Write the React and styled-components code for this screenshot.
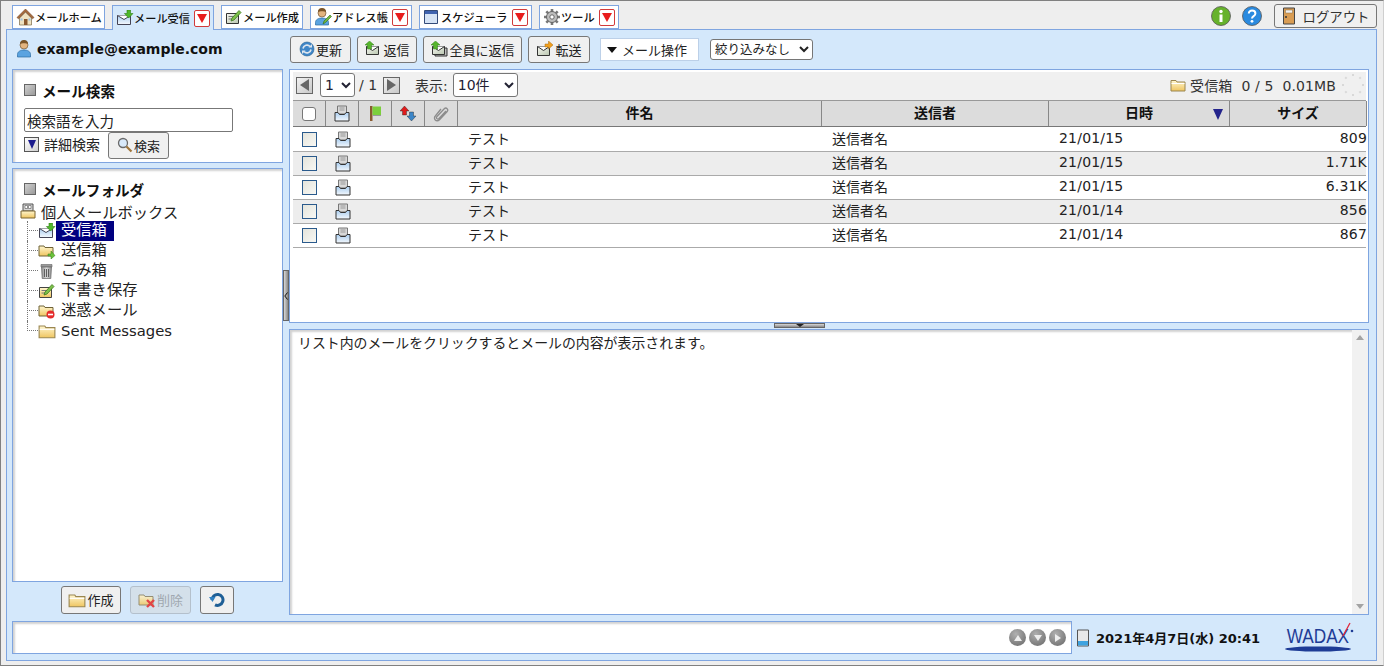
import styled, { createGlobalStyle } from "styled-components";

const GlobalStyle = createGlobalStyle`
  html, body {
    margin: 0;
    padding: 0;
    background: #eeeeee;
  }
  body {
    font-family: "DejaVu Sans", "Noto Sans CJK JP", sans-serif;
    color: #222;
  }
  * {
    box-sizing: border-box;
  }
`;

const Window = styled.div`
  width: 1384px;
  height: 666px;
  display: flex;
  flex-direction: column;
  background: #eeeeee;
  border: 1px solid #808080;
  border-right-color: #cfcfcf;
  overflow: hidden;
`;

const TopBar = styled.div`
  height: 28px;
  flex: none;
  display: flex;
  align-items: flex-end;
  padding: 0 6px 0 11px;
  gap: 7px;
`;

const Tab = styled.div`
  width: ${(p) => p.$w}px;
  height: ${(p) => (p.$active ? 25 : 24)}px;
  margin-bottom: ${(p) => (p.$active ? -1 : 0)}px;
  display: flex;
  align-items: center;
  padding-left: 3px;
  background: ${(p) => (p.$active ? "#d4e8fb" : "#fff")};
  border: 1px solid #7fa5e0;
  border-bottom: ${(p) => (p.$active ? "none" : "1px solid #7fa5e0")};
  font-size: 11.2px;
  font-weight: 500;
  color: #111;
  white-space: nowrap;
  position: relative;
  z-index: 1;
`;

const TabText = styled.span`
  flex: 1;
`;

const TabDrop = styled.span`
  width: 16px;
  height: 17px;
  flex: none;
  margin-right: 3px;
  background: #fff;
  border: 1px solid #d23a3a;
  border-radius: 2px;
  display: flex;
  align-items: center;
  justify-content: center;
  &::before {
    content: "";
    border-left: 5px solid transparent;
    border-right: 5px solid transparent;
    border-top: 9px solid #e81c1c;
  }
`;

const TopRight = styled.div`
  margin-left: auto;
  display: flex;
  align-items: center;
  gap: 11px;
  height: 28px;
  padding-top: 2px;
`;

const LogoutButton = styled.button`
  width: 103px;
  height: 24px;
  margin-left: 1px;
  display: flex;
  align-items: center;
  justify-content: center;
  gap: 7px;
  padding: 0;
  background: #f0f0f0;
  border: 1px solid #777;
  border-radius: 3px;
  font: inherit;
  font-size: 13.4px;
  color: #333;
`;

const Panel = styled.div`
  flex: 1;
  margin: 0 6px 4px 5px;
  display: flex;
  flex-direction: column;
  padding: 0 7px 6px 5px;
  background: #d4e8fb;
  border: 1px solid #7fa5e0;
  min-height: 0;
`;

const Body = styled.div`
  flex: 1;
  display: flex;
  min-height: 0;
`;

const LeftColumn = styled.div`
  width: 271px;
  flex: none;
  display: flex;
  flex-direction: column;
`;

const UserRow = styled.div`
  height: 39px;
  flex: none;
  display: flex;
  align-items: center;
  gap: 3px;
  padding: 0 0 2px 4px;
  font-size: 14px;
  font-weight: 700;
  color: #111;
`;

const Box = styled.div`
  background: #fff;
  border: 1px solid #7fa5e0;
  box-shadow: inset 2px 2px 2px rgba(0, 0, 0, 0.18);
`;

const SearchBox = styled(Box)`
  height: 94px;
  flex: none;
  padding: 10px 11px 0;
`;

const FolderBox = styled(Box)`
  flex: 1;
  margin-top: 5px;
  padding: 10px 7px 0;
`;

const BoxTitle = styled.div`
  display: flex;
  align-items: center;
  gap: 6px;
  height: 20px;
  padding-left: ${(p) => p.$indent || 0}px;
  font-size: 14.6px;
  font-weight: 700;
  color: #111;
  &::before {
    content: "";
    width: 10px;
    height: 10px;
    background: linear-gradient(135deg, #d0d0d0, #9a9a9a);
    border: 1px solid #666;
  }
`;

const SearchInput = styled.input`
  display: block;
  width: 209px;
  height: 24px;
  margin-top: 8px;
  padding: 0 2px;
  border: 1px solid #777;
  border-radius: 2px;
  font: inherit;
  font-size: 14.5px;
  color: #222;
  background: #fff;
`;

const SearchRow = styled.div`
  display: flex;
  align-items: flex-start;
  font-size: 14px;
  height: 27px;
`;

const DetailToggle = styled.span`
  width: 15px;
  height: 15px;
  flex: none;
  margin: 5px 5px 0 0;
  background: linear-gradient(135deg, #fff, #cfcfcf);
  border: 1px solid #555;
  display: flex;
  align-items: center;
  justify-content: center;
  &::before {
    content: "";
    border-left: 4px solid transparent;
    border-right: 4px solid transparent;
    border-top: 9px solid #1a1a8c;
  }
`;

const DetailLabel = styled.span`
  margin-top: 2px;
  width: 64px;
  white-space: nowrap;
`;

const Btn = styled.button`
  height: ${(p) => p.$h || 27}px;
  width: ${(p) => p.$w}px;
  flex: none;
  display: flex;
  align-items: center;
  justify-content: center;
  gap: 1px;
  padding: 0 0 1px;
  background: ${(p) => (p.disabled ? "#d4e0ea" : "#f0f0f0")};
  border: 1px solid ${(p) => (p.disabled ? "#b4c0cc" : "#777")};
  border-radius: 3px;
  font: inherit;
  font-size: 13px;
  color: ${(p) => (p.disabled ? "#a0a8b0" : "#222")};
`;

const Tree = styled.div`
  margin-top: 2px;
  font-size: 15.3px;
  color: #222;
`;

const TreeRoot = styled.div`
  display: flex;
  align-items: center;
  gap: 5px;
  height: 20px;
  white-space: nowrap;
`;

const TreeList = styled.div`
  padding-left: 18px;
`;

const TreeItem = styled.div`
  height: 20px;
  display: flex;
  align-items: center;
  position: relative;
  &::before {
    content: "";
    position: absolute;
    left: -11px;
    top: 9px;
    width: 11px;
    border-top: 1px dotted #777;
  }
  &::after {
    content: "";
    position: absolute;
    left: -11px;
    top: 0;
    height: ${(p) => (p.$last ? 10 : 20)}px;
    border-left: 1px dotted #777;
  }
`;

const TreeLabel = styled.span`
  height: 20px;
  line-height: 19px;
  padding: 0 ${(p) => (p.$selected ? 7 : 0)}px 0 5px;
  background: ${(p) => (p.$selected ? "#000080" : "transparent")};
  color: ${(p) => (p.$selected ? "#fff" : "#222")};
  font-size: ${(p) => (p.$latin ? 14.8 : 15.3)}px;
  white-space: nowrap;
`;

const FolderActions = styled.div`
  height: 39px;
  flex: none;
  display: flex;
  align-items: flex-start;
  padding: 4px 0 0 49px;
  gap: 9px;
`;

const Splitter = styled.div`
  width: 6px;
  flex: none;
  padding-top: 240px;
`;

const SplitGrip = styled.div`
  width: 6px;
  height: 51px;
  background: linear-gradient(90deg, #d8d8d8, #888);
  border: 1px solid #666;
  display: flex;
  align-items: center;
  justify-content: center;
`;

const RightColumn = styled.div`
  flex: 1;
  min-width: 0;
  display: flex;
  flex-direction: column;
`;

const Toolbar = styled.div`
  height: 39px;
  flex: none;
  display: flex;
  align-items: flex-start;
  padding: 6px 0 0 1px;
  gap: 6px;
`;

const ActionMenu = styled.div`
  width: 99px;
  height: 23px;
  margin: 2px 0 0 4px;
  display: flex;
  align-items: center;
  padding-left: 6px;
  gap: 5px;
  background: #fff;
  border: 1px solid #bcd0e8;
  font-size: 13px;
  white-space: nowrap;
  &::before {
    content: "";
    border-left: 5px solid transparent;
    border-right: 5px solid transparent;
    border-top: 6px solid #111;
  }
`;

const FilterSelect = styled.select`
  width: 103px;
  height: 21px;
  margin: 3px 0 0 5px;
  padding: 0;
  border: 1px solid #767676;
  border-radius: 3px;
  background: #fff;
  font: inherit;
  font-size: 12.5px;
  color: #222;
`;

const ListBox = styled(Box)`
  height: 254px;
  flex: none;
  padding: 2px 2px 0 3px;
  background: #fff;
  box-shadow: none;
`;

const Pager = styled.div`
  height: 28px;
  display: flex;
  align-items: center;
  padding: 0 1px 2px 3px;
  background: #f0f0f0;
  font-size: 14px;
  color: #333;
`;

const PageArrow = styled.span`
  width: 17px;
  height: 17px;
  flex: none;
  background: linear-gradient(135deg, #f2f2f2, #c8c8c8);
  border: 1px solid #666;
  display: flex;
  align-items: center;
  justify-content: center;
  &::before {
    content: "";
    border-top: 6px solid transparent;
    border-bottom: 6px solid transparent;
    ${(p) => (p.$dir === "left" ? "border-right" : "border-left")}: 9px solid #666;
  }
`;

const PagerSelect = styled.select`
  width: ${(p) => p.$w}px;
  height: 24px;
  flex: none;
  margin-left: ${(p) => p.$ml || 0}px;
  border: 1px solid #767676;
  border-radius: 3px;
  background: #fff;
  font: inherit;
  font-size: 14px;
  color: #223;
`;

const PagerText = styled.span`
  margin: 0 ${(p) => p.$mr || 0}px 0 ${(p) => p.$ml || 0}px;
  white-space: nowrap;
`;

const PagerInfo = styled.div`
  margin-left: auto;
  display: flex;
  align-items: center;
  gap: 4px;
  white-space: nowrap;
  letter-spacing: 0.1px;
`;

const columns = "33px 33px 33px 33px 33px 364px 227px 181px 137px";

const HeadRow = styled.div`
  display: grid;
  grid-template-columns: ${columns};
  height: 27px;
  margin-bottom: 1px;
  background: #dcdcdc;
  border-top: 1px solid #999;
  border-bottom: 1px solid #777;
`;

const HeadCell = styled.div`
  display: flex;
  align-items: center;
  justify-content: center;
  border-right: 1px solid #888;
  padding-bottom: 4px;
  font-size: 14px;
  font-weight: 700;
  color: #111;
  position: relative;
`;

const IconHeadCell = styled(HeadCell)`
  padding-bottom: 0;
`;

const SortMark = styled.span`
  position: absolute;
  right: 6px;
  top: 8px;
  border-left: 5px solid transparent;
  border-right: 5px solid transparent;
  border-top: 11px solid #24248c;
`;

const HeadCheck = styled.span`
  width: 14px;
  height: 14px;
  background: #fff;
  border: 1px solid #777;
  border-radius: 3px;
`;

const MailRow = styled.div`
  display: grid;
  grid-template-columns: ${columns};
  height: 24px;
  align-items: center;
  background: ${(p) => (p.$alt ? "#ededed" : "#fff")};
  border-bottom: 1px solid #aaa;
  font-size: 14px;
  color: #222;
`;

const RowCheck = styled.span`
  width: 15px;
  height: 15px;
  justify-self: center;
  background: linear-gradient(135deg, #e4e4dc, #f8f8f4);
  border: 1px solid #2a5a8c;
`;

const IconCell = styled.span`
  display: flex;
  justify-content: center;
`;

const MailText = styled.span`
  padding: 0 0 3px ${(p) => (p.$right ? 0 : 10)}px;
  text-align: ${(p) => (p.$right ? "right" : "left")};
  font-size: 14px;
  letter-spacing: ${(p) => (p.$num ? "0.2px" : "0")};
  white-space: nowrap;
`;

const HSplit = styled.div`
  height: 6px;
  flex: none;
  padding-left: 485px;
`;

const HGrip = styled.div`
  width: 51px;
  height: 5px;
  background: linear-gradient(180deg, #d8d8d8, #888);
  border: 1px solid #666;
  display: flex;
  align-items: center;
  justify-content: center;
  &::before {
    content: "";
    border-left: 4px solid transparent;
    border-right: 4px solid transparent;
    border-top: 3px solid #222;
  }
`;

const PreviewBox = styled(Box)`
  flex: 1;
  margin-bottom: 6px;
  display: flex;
  min-height: 0;
`;

const PreviewText = styled.div`
  flex: 1;
  padding: 3px 8px;
  font-size: 13.9px;
  line-height: 20px;
  color: #222;
`;

const ScrollTrack = styled.div`
  width: 16px;
  flex: none;
  background: #f1f1f1;
  display: flex;
  flex-direction: column;
  justify-content: space-between;
  align-items: center;
  padding: 5px 0;
`;

const ScrollArrow = styled.span`
  border-left: 4px solid transparent;
  border-right: 4px solid transparent;
  ${(p) => (p.$up ? "border-bottom" : "border-top")}: 5px solid #a3a3a3;
`;

const StatusRow = styled.div`
  height: 33px;
  flex: none;
  display: flex;
  align-items: center;
`;

const StatusBox = styled(Box)`
  width: 1060px;
  height: 33px;
  flex: none;
  display: flex;
  align-items: center;
  justify-content: flex-end;
  gap: 3px;
  padding-right: 5px;
  margin-right: 4px;
`;

const RoundNav = styled.span`
  width: 17px;
  height: 17px;
  border-radius: 50%;
  background: radial-gradient(circle at 40% 30%, #b0b0b0, #666);
  display: flex;
  align-items: center;
  justify-content: center;
  &::before {
    content: "";
    ${(p) =>
      p.$dir === "up"
        ? "border-left: 4px solid transparent; border-right: 4px solid transparent; border-bottom: 6px solid #eee;"
        : p.$dir === "down"
          ? "border-left: 4px solid transparent; border-right: 4px solid transparent; border-top: 6px solid #eee;"
          : "border-top: 4px solid transparent; border-bottom: 4px solid transparent; border-left: 6px solid #eee;"}
  }
`;

const DateText = styled.div`
  font-size: 13px;
  font-weight: 700;
  color: #111;
  white-space: nowrap;
  margin-left: 6px;
`;

const LogoWrap = styled.div`
  margin-left: auto;
  margin-right: 14px;
  display: flex;
`;

const HiddenDefs = styled.svg`
  position: absolute;
  width: 0;
  height: 0;
`;

// shared gradients for the small icons
const IconDefs = () => (
  <HiddenDefs aria-hidden="true">
    <defs>
      <linearGradient id="folderFill" x1="0" y1="0" x2="0" y2="1">
        <stop offset="0" stopColor="#fff6cf" />
        <stop offset="1" stopColor="#efc560" />
      </linearGradient>
      <linearGradient id="trayFill" x1="0" y1="0" x2="0" y2="1">
        <stop offset="0" stopColor="#a9cdf0" />
        <stop offset="1" stopColor="#f4f8fc" />
      </linearGradient>
      <linearGradient id="grayFill" x1="0" y1="0" x2="1" y2="0">
        <stop offset="0" stopColor="#8f8f8f" />
        <stop offset=".5" stopColor="#dadada" />
        <stop offset="1" stopColor="#8f8f8f" />
      </linearGradient>
      <linearGradient id="paperFill" x1="0" y1="0" x2="1" y2="1">
        <stop offset="0" stopColor="#f6f6f0" />
        <stop offset="1" stopColor="#b9c6b0" />
      </linearGradient>
    </defs>
  </HiddenDefs>
);

const Folder = ({ size = 16 }) => (
  <svg width={size} height={size} viewBox="0 0 16 16">
    <path d="M1 3.500h5l1 1.500h8v9H1z" fill="url(#folderFill)" stroke="#9a8650" />
    <path d="M1.500 6.500h13" stroke="#fff" />
  </svg>
);

const Tray = () => (
  <svg width="16" height="17" viewBox="0 0 16 17">
    <path d="M3.500 1h9v8h-9z" fill="#d8d8d8" stroke="#777" />
    <path d="M5.500 3h5M5.500 5h5" stroke="#999" />
    <path d="M1 7.500h3l1.500 2h5l1.500-2h3v8.500H1z" fill="url(#trayFill)" stroke="#333" />
  </svg>
);

const MailIn = () => (
  <svg width="18" height="16" viewBox="0 0 18 16">
    <path d="M1.500 5.500h13v9h-13z" fill="url(#trayFill)" stroke="#445" />
    <path d="M1.500 5.500l6.500 4 6.500-4" fill="#fff" stroke="#445" />
    <path d="M11 0h3.500v3.500H17l-4.300 4.500-4.300-4.500H11z" fill="#4fb82a" stroke="#2f7d16" strokeWidth=".6" />
  </svg>
);

const Pencil = () => (
  <svg width="18" height="16" viewBox="0 0 18 16">
    <path d="M1.500 4.500h12v10h-12z" fill="url(#paperFill)" stroke="#333" />
    <path d="M3.500 7.500h6M3.500 10h4" stroke="#777" />
    <path d="M6 12l1-3 7-7.500 2 2-7 7.500z" fill="#7cc04a" stroke="#3d7a1c" strokeWidth=".8" />
  </svg>
);

const DraftFolder = () => (
  <svg width="18" height="16" viewBox="0 0 18 16">
    <path d="M1.500 4.500h12v10h-12z" fill="url(#folderFill)" stroke="#444" />
    <path d="M3.500 7.500h6M3.500 10h4" stroke="#777" />
    <path d="M6 12l1-3 7-7.500 2 2-7 7.500z" fill="#7cc04a" stroke="#3d7a1c" strokeWidth=".8" />
  </svg>
);

const Home = () => (
  <svg width="19" height="18" viewBox="0 0 19 18">
    <path d="M3.500 10L9.500 4l6 6v7h-12z" fill="#efe3c2" stroke="#7a6a48" strokeWidth=".7" />
    <path d="M1 9.500L9.500 1 18 9.500l-1.500 1.200L9.500 3.800l-7 6.900z" fill="#a86b3c" stroke="#6e4526" strokeWidth=".6" />
    <path d="M8 11h3.500v6H8z" fill="#8a5a30" />
    <path d="M12.500 10.500h2v2h-2zM4.500 10.500h2v2h-2z" fill="#9cc4e8" />
  </svg>
);

const Person = ({ size = 18, pen }) => (
  <svg width={size} height={size} viewBox="0 0 18 18">
    <circle cx="8" cy="5" r="4" fill="#e3b47f" stroke="#7a5a36" strokeWidth=".7" />
    <path d="M4 4a4 4 0 0 1 8 0c-2-1-6-1-8 0z" fill="#7a5428" />
    <path d="M1.500 17v-2.500c0-3 3-4.500 6.500-4.500s6.500 1.500 6.500 4.500V17z" fill="#5aa3e0" stroke="#2a6aa0" strokeWidth=".7" />
    {pen && <path d="M9 16l1-3 6-6 1.500 1.500-6 6z" fill="#6fb840" stroke="#356b18" strokeWidth=".6" />}
  </svg>
);

const Calendar = () => (
  <svg width="18" height="16" viewBox="0 0 18 16">
    <path d="M1.500 1.500h13v13h-13z" fill="#d5e3f5" stroke="#334a78" />
    <path d="M2 2h12v3H2z" fill="#3f63b0" />
  </svg>
);

const Gear = () => (
  <svg width="18" height="18" viewBox="0 0 18 18">
    <g stroke="#777" strokeWidth="2.600">
      <path d="M9 1v16M1 9h16M3.300 3.300l11.400 11.400M14.700 3.300L3.300 14.700" />
    </g>
    <circle cx="9" cy="9" r="5.500" fill="#bdbdbd" stroke="#666" />
    <circle cx="9" cy="9" r="2.200" fill="#fff" stroke="#666" />
  </svg>
);

const Refresh = ({ size = 16 }) => (
  <svg width={size} height={size} viewBox="0 0 16 16">
    <circle cx="8" cy="8" r="7" fill="#3f86c8" stroke="#25608f" strokeWidth=".6" />
    <path d="M4 7.500a4 4 0 0 1 7-2" fill="none" stroke="#dfe6ee" strokeWidth="1.700" />
    <path d="M12 8.500a4 4 0 0 1-7 2" fill="none" stroke="#dfe6ee" strokeWidth="1.700" />
    <path d="M9.500 6.500h3.500V3zM6.500 9.500H3V13z" fill="#dfe6ee" />
  </svg>
);

const Reply = ({ all }) => (
  <svg width="18" height="16" viewBox="0 0 18 16">
    {all && <path d="M5 7h12v8H5z" fill="#bbb" stroke="#333" />}
    <path d="M2.500 5.500h12v8h-12z" fill="url(#paperFill)" stroke="#333" />
    <path d="M2.500 5.500l6 4 6-4" fill="#fff" stroke="#333" />
    <path d="M5.500 0L1 4h2.500v4h4V4H10z" fill="#57b52c" stroke="#2f7d16" strokeWidth=".5" />
  </svg>
);

const Forward = () => (
  <svg width="18" height="16" viewBox="0 0 18 16">
    <path d="M1.500 5.500h12v9h-12z" fill="url(#paperFill)" stroke="#333" />
    <path d="M1.500 5.500l6 4 6-4" fill="#fff" stroke="#333" />
    <path d="M12.500 0L17 4l-4.500 4V6H9V3h3.500z" fill="#f2a01e" stroke="#a86a10" strokeWidth=".5" />
  </svg>
);

const Search = () => (
  <svg width="16" height="16" viewBox="0 0 16 16">
    <circle cx="6" cy="6" r="4.500" fill="#d8e9fa" stroke="#6a6a6a" strokeWidth="1.300" />
    <path d="M9.500 9.500l5 5" stroke="#a0763c" strokeWidth="2.200" />
  </svg>
);

const Door = () => (
  <svg width="14" height="18" viewBox="0 0 14 18">
    <path d="M1.500 1h11v16h-11z" fill="#d89c54" stroke="#444" />
    <path d="M3.500 3h7v3h-7z" fill="#f0f0f0" stroke="#8a6a3a" strokeWidth=".5" />
    <circle cx="4" cy="10" r="1" fill="#333" />
  </svg>
);

const Flag = () => (
  <svg width="16" height="17" viewBox="0 0 16 17">
    <path d="M3 1h2.500v15H3z" fill="#8a5a30" />
    <path d="M5.500 1.500h8.500v8.500H5.500z" fill="#7ccf3c" />
    <path d="M6 10.500h8" stroke="#999" />
  </svg>
);

const Priority = () => (
  <svg width="18" height="17" viewBox="0 0 18 17">
    <path d="M5.500 1L10 6H7.500v4h-4V6H1z" fill="#e01c1c" stroke="#222" strokeWidth=".4" />
    <path d="M12.500 16L8 11h2.500V7h4v4H17z" fill="#3c86c8" stroke="#222" strokeWidth=".4" />
  </svg>
);

const Clip = () => (
  <svg width="16" height="16" viewBox="0 0 16 16">
    <path
      d="M13 5l-7 7.500c-1.500 1.500-3.500-.5-2-2l7-7.500c2.300-2.300 5 .5 3 2.700l-7.500 8c-3 3-7-1-4-4L8 3"
      fill="none"
      stroke="#8c8c8c"
      strokeWidth="1.300"
    />
  </svg>
);

const Mailbox = () => (
  <svg width="16" height="16" viewBox="0 0 16 16">
    <path d="M3 1h10v7H3z" fill="#d8d8d8" stroke="#555" />
    <path d="M5 2.500h2.500v3H5zM8.500 2.500H11v3H8.500z" fill="#fff" stroke="#555" strokeWidth=".6" />
    <path d="M1 8h14v7H1z" fill="url(#folderFill)" stroke="#7a6430" />
  </svg>
);

const SentFolder = () => (
  <svg width="18" height="16" viewBox="0 0 18 16">
    <path d="M1 3h5l1 1.500h8V13H1z" fill="url(#folderFill)" stroke="#6f6236" />
    <path d="M10 11h3V8l4 4.500-4 3.500v-3h-3z" fill="#6cc23a" stroke="#2f7d16" strokeWidth=".5" />
  </svg>
);

const Trash = () => (
  <svg width="18" height="16" viewBox="0 0 18 16">
    <path d="M3 1.500h11v2.500H3z" fill="#999" stroke="#666" strokeWidth=".6" />
    <path d="M3.500 4h10l-.7 11.500H4.200z" fill="url(#grayFill)" stroke="#666" strokeWidth=".7" />
    <path d="M6.500 6v8M8.500 6v8M10.500 6v8" stroke="#5f5f5f" />
  </svg>
);

const SpamFolder = () => (
  <svg width="18" height="16" viewBox="0 0 18 16">
    <path d="M1 3h5l1 1.500h8V13H1z" fill="url(#folderFill)" stroke="#6f6236" />
    <circle cx="12.500" cy="11.500" r="4" fill="#e52a2a" />
    <path d="M10 11.500h5" stroke="#fff" strokeWidth="1.600" />
  </svg>
);

const DeleteFolder = () => (
  <svg width="18" height="16" viewBox="0 0 18 16" opacity=".85">
    <path d="M1 3h5l1 1.500h8V13H1z" fill="url(#folderFill)" stroke="#8a8060" />
    <path d="M9 8l7 7M16 8l-7 7" stroke="#e52a2a" strokeWidth="2.400" />
  </svg>
);

const Undo = () => (
  <svg width="16" height="16" viewBox="0 0 16 16">
    <path d="M3 8a5.500 5.500 0 1 1 3 4.800" fill="none" stroke="#1f5f96" strokeWidth="3" />
    <path d="M0 5h6.500L3.500 10z" fill="#2f7fc0" />
  </svg>
);

const InfoIcon = () => (
  <svg width="20" height="20" viewBox="0 0 20 20">
    <circle cx="10" cy="10" r="9.500" fill="#66b22c" stroke="#555" strokeWidth=".8" />
    <path d="M8.500 8.500h3V16h-3z" fill="#fff" />
    <circle cx="10" cy="5.500" r="1.700" fill="#fff" />
  </svg>
);

const HelpIcon = () => (
  <svg width="20" height="20" viewBox="0 0 20 20">
    <circle cx="10" cy="10" r="9.500" fill="#2a8adf" stroke="#555" strokeWidth=".8" />
    <path d="M6.800 7.500c0-4.200 6.600-4 6.600 0 0 2.800-3.400 2.500-3.400 5" fill="none" stroke="#fff" strokeWidth="2" />
    <circle cx="10" cy="15.300" r="1.400" fill="#fff" />
  </svg>
);

const Spinner = () => (
  <svg width="24" height="24" viewBox="0 0 24 24">
    {[0, 45, 90, 135, 180, 225, 270, 315].map((a) => (
      <rect key={a} x="11" y="1" width="2" height="2" fill="#d8d8d8" transform={`rotate(${a} 12 12)`} />
    ))}
  </svg>
);

const Battery = () => (
  <svg width="14" height="18" viewBox="0 0 14 18">
    <path d="M1.500 1h11v16h-11z" fill="#e8e8e8" stroke="#555" />
    <path d="M2 12h10v4.500H2z" fill="#3fa3e0" />
  </svg>
);

const GripChevron = () => (
  <svg width="4" height="8" viewBox="0 0 4 8">
    <path d="M3.500 .5L.8 4l2.700 3.500" fill="none" stroke="#111" />
  </svg>
);

const WadaxLogo = () => (
  <svg width="70" height="33" viewBox="0 0 70 33">
    <text transform="scale(.82 1)" x="2" y="22" fontFamily="Liberation Sans" fontSize="21" fill="#1e3c96">
      WADAX
    </text>
    <path d="M58 15l7-13" stroke="#e0283c" strokeWidth="1.300" />
    <circle cx="67" cy="10" r="1.300" fill="#1e3c96" />
    <ellipse cx="33" cy="28" rx="33" ry="2.600" fill="#1e3c96" />
  </svg>
);

const tabs = [
  { label: "メールホーム", w: 93, icon: <Home /> },
  { label: "メール受信", w: 102, icon: <MailIn />, drop: true, active: true },
  { label: "メール作成", w: 82, icon: <Pencil /> },
  { label: "アドレス帳", w: 102, icon: <Person pen />, drop: true },
  { label: "スケジューラ", w: 113, icon: <Calendar />, drop: true },
  { label: "ツール", w: 80, icon: <Gear />, drop: true },
];

const folders = [
  { label: "受信箱", icon: <MailIn />, selected: true },
  { label: "送信箱", icon: <SentFolder /> },
  { label: "ごみ箱", icon: <Trash /> },
  { label: "下書き保存", icon: <DraftFolder /> },
  { label: "迷惑メール", icon: <SpamFolder /> },
  { label: "Sent Messages", icon: <Folder size={18} />, latin: true },
];

const mails = [
  { date: "21/01/15", size: "809" },
  { date: "21/01/15", size: "1.71K" },
  { date: "21/01/15", size: "6.31K" },
  { date: "21/01/14", size: "856" },
  { date: "21/01/14", size: "867" },
];

const App = () => {
  return (
    <Window>
      <GlobalStyle />
      <IconDefs />
      <TopBar>
        {tabs.map((t) => (
          <Tab key={t.label} $w={t.w} $active={t.active}>
            {t.icon}
            <TabText>{t.label}</TabText>
            {t.drop && <TabDrop />}
          </Tab>
        ))}
        <TopRight>
          <InfoIcon />
          <HelpIcon />
          <LogoutButton>
            <Door />
            ログアウト
          </LogoutButton>
        </TopRight>
      </TopBar>
      <Panel>
        <Body>
          <LeftColumn>
            <UserRow>
              <Person />
              example@example.com
            </UserRow>
            <SearchBox>
              <BoxTitle>メール検索</BoxTitle>
              <SearchInput defaultValue="検索語を入力" />
              <SearchRow>
                <DetailToggle />
                <DetailLabel>詳細検索</DetailLabel>
                <Btn $w={61}>
                  <Search />
                  検索
                </Btn>
              </SearchRow>
            </SearchBox>
            <FolderBox>
              <BoxTitle $indent={4}>メールフォルダ</BoxTitle>
              <Tree>
                <TreeRoot>
                  <Mailbox />
                  個人メールボックス
                </TreeRoot>
                <TreeList>
                  {folders.map((f, i) => (
                    <TreeItem key={f.label} $last={i === folders.length - 1}>
                      {f.icon}
                      <TreeLabel $selected={f.selected} $latin={f.latin}>
                        {f.label}
                      </TreeLabel>
                    </TreeItem>
                  ))}
                </TreeList>
              </Tree>
            </FolderBox>
            <FolderActions>
              <Btn $w={60} $h={28}>
                <Folder size={18} />
                作成
              </Btn>
              <Btn $w={61} $h={28} disabled>
                <DeleteFolder />
                削除
              </Btn>
              <Btn $w={34} $h={28}>
                <Undo />
              </Btn>
            </FolderActions>
          </LeftColumn>
          <Splitter>
            <SplitGrip>
              <GripChevron />
            </SplitGrip>
          </Splitter>
          <RightColumn>
            <Toolbar>
              <Btn $w={61}>
                <Refresh />
                更新
              </Btn>
              <Btn $w={60}>
                <Reply />
                返信
              </Btn>
              <Btn $w={99}>
                <Reply all />
                全員に返信
              </Btn>
              <Btn $w={62}>
                <Forward />
                転送
              </Btn>
              <ActionMenu>メール操作</ActionMenu>
              <FilterSelect defaultValue="none">
                <option value="none">絞り込みなし</option>
              </FilterSelect>
            </Toolbar>
            <ListBox>
              <Pager>
                <PageArrow $dir="left" />
                <PagerSelect $w={35} $ml={7} defaultValue="1">
                  <option>1</option>
                </PagerSelect>
                <PagerText $ml={4} $mr={6}>/ 1</PagerText>
                <PageArrow $dir="right" />
                <PagerText $ml={15} $mr={5}>表示:</PagerText>
                <PagerSelect $w={65} defaultValue="10件">
                  <option>10件</option>
                </PagerSelect>
                <PagerInfo>
                  <Folder />
                  <PagerText $mr={1}>受信箱&nbsp;&nbsp;0 / 5&nbsp;&nbsp;0.01MB</PagerText>
                  <Spinner />
                </PagerInfo>
              </Pager>
              <HeadRow>
                <IconHeadCell>
                  <HeadCheck />
                </IconHeadCell>
                <IconHeadCell>
                  <Tray />
                </IconHeadCell>
                <IconHeadCell>
                  <Flag />
                </IconHeadCell>
                <IconHeadCell>
                  <Priority />
                </IconHeadCell>
                <IconHeadCell>
                  <Clip />
                </IconHeadCell>
                <HeadCell>件名</HeadCell>
                <HeadCell>送信者</HeadCell>
                <HeadCell>
                  日時
                  <SortMark />
                </HeadCell>
                <HeadCell>サイズ</HeadCell>
              </HeadRow>
              {mails.map((m, i) => (
                <MailRow key={i} $alt={i % 2 === 1}>
                  <RowCheck />
                  <IconCell>
                    <Tray />
                  </IconCell>
                  <span />
                  <span />
                  <span />
                  <MailText>テスト</MailText>
                  <MailText>送信者名</MailText>
                  <MailText $num>{m.date}</MailText>
                  <MailText $num $right>
                    {m.size}
                  </MailText>
                </MailRow>
              ))}
            </ListBox>
            <HSplit>
              <HGrip />
            </HSplit>
            <PreviewBox>
              <PreviewText>リスト内のメールをクリックするとメールの内容が表示されます。</PreviewText>
              <ScrollTrack>
                <ScrollArrow $up />
                <ScrollArrow />
              </ScrollTrack>
            </PreviewBox>
          </RightColumn>
        </Body>
        <StatusRow>
          <StatusBox>
            <RoundNav $dir="up" />
            <RoundNav $dir="down" />
            <RoundNav $dir="right" />
          </StatusBox>
          <Battery />
          <DateText>2021年4月7日(水) 20:41</DateText>
          <LogoWrap>
            <WadaxLogo />
          </LogoWrap>
        </StatusRow>
      </Panel>
    </Window>
  );
};

export default App;
